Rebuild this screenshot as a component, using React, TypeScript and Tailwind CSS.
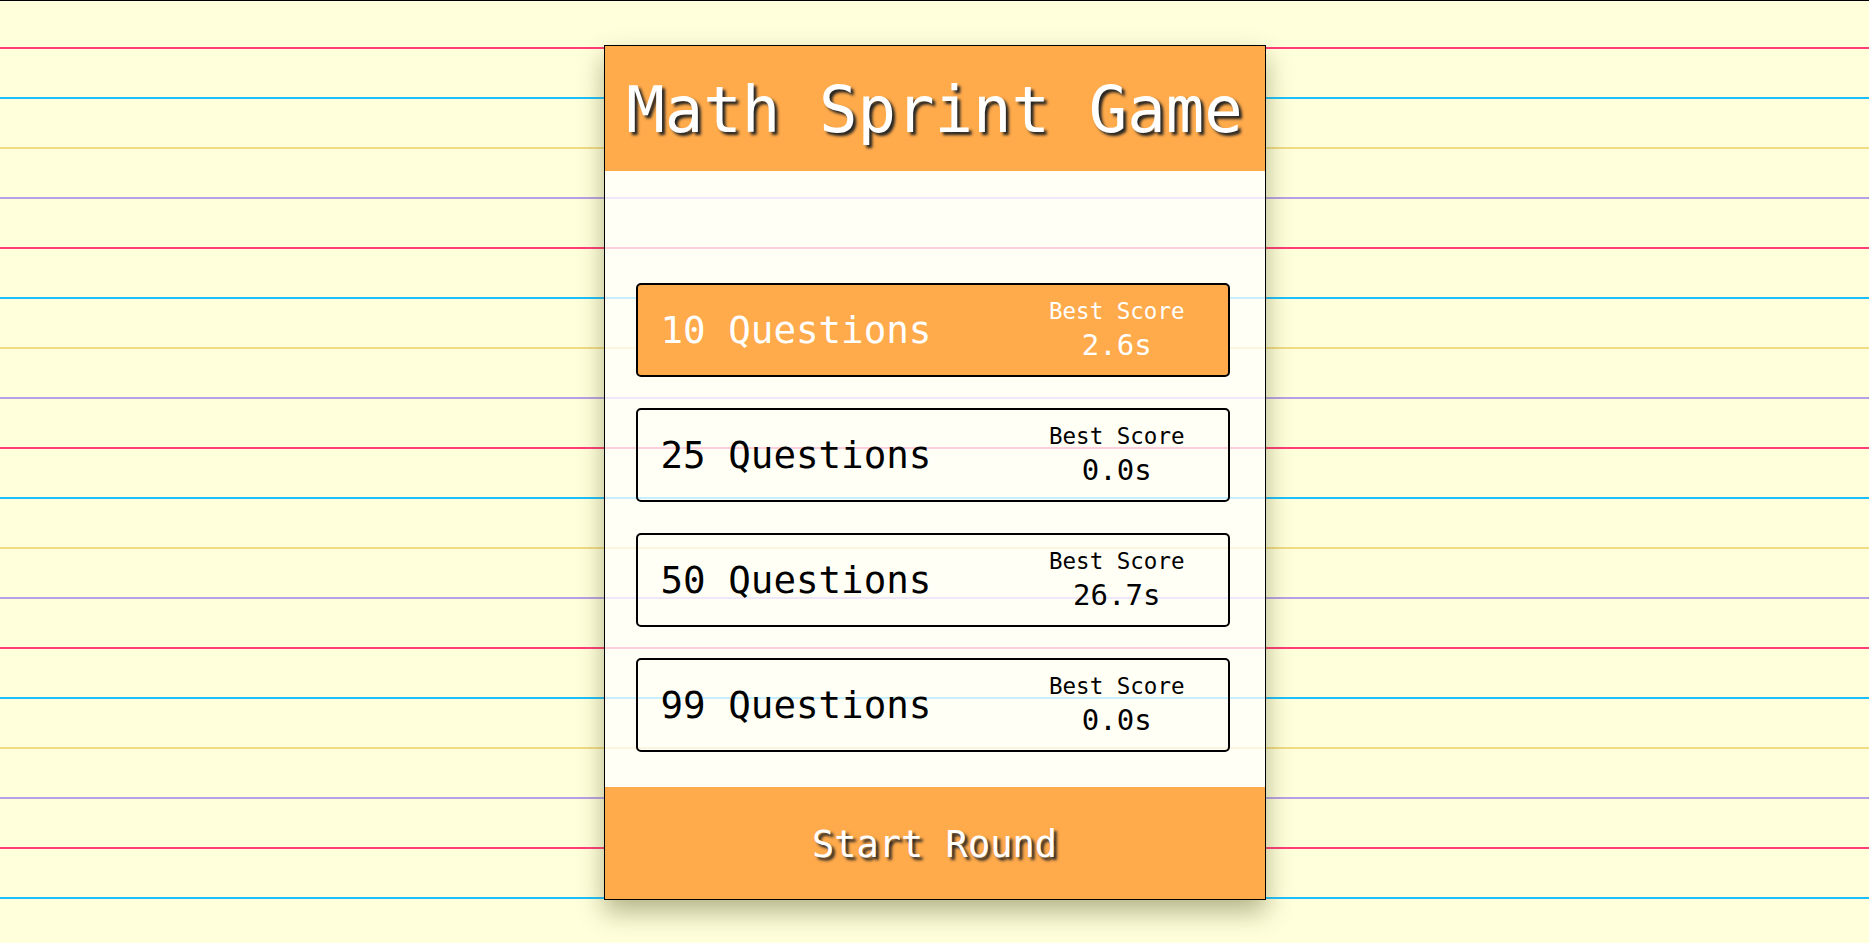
const rounds = [
  { count: 10, best: "2.6s", selected: true },
  { count: 25, best: "0.0s", selected: false },
  { count: 50, best: "26.7s", selected: false },
  { count: 99, best: "0.0s", selected: false },
];

export default function App() {
  return (
    <div className="min-h-screen w-full border-t border-black bg-[#ffffdc] bg-[repeating-linear-gradient(to_bottom,transparent_0px,transparent_46px,#ff3d77_46px,#ff3d77_48px,transparent_48px,transparent_96px,#1cc0ff_96px,#1cc0ff_98px,transparent_98px,transparent_146px,#f1dc84_146px,#f1dc84_148px,transparent_148px,transparent_196px,#b6a0e6_196px,#b6a0e6_198px,transparent_198px,transparent_200px)] pt-[44px] font-['DejaVu_Sans_Mono',monospace]">
      <div className="mx-auto flex h-[855px] w-[662px] flex-col border border-black bg-[#ffffff]/75 shadow-[0_12px_24px_rgba(90,90,40,0.45)]">
        <header className="flex h-[125px] items-center justify-center bg-[#ffab4c] pt-[3px]">
          <h1 className="text-[64px] text-white [text-shadow:3px_3px_3px_#222]">
            Math Sprint Game
          </h1>
        </header>

        <div className="flex flex-1 flex-col gap-[31px] pl-[31px] pr-[35px] pt-[112px]">
          {rounds.map((r) => (
            <div
              key={r.count}
              className={
                r.selected
                  ? "flex h-[94px] items-center justify-between rounded-[5px] border-2 border-black bg-[#ffab4c] pl-[23px] pr-[43px] text-white"
                  : "flex h-[94px] items-center justify-between rounded-[5px] border-2 border-black pl-[23px] pr-[43px] text-black"
              }
            >
              <span className="text-[37.5px]">{r.count} Questions</span>
              <div className="flex flex-col items-center">
                <span className="text-[22.5px] leading-[30px]">Best Score</span>
                <span className="text-[29px] leading-[38px]">{r.best}</span>
              </div>
            </div>
          ))}
        </div>

        <footer className="flex h-[112px] items-center justify-center bg-[#ffab4c] pt-[4px]">
          <span className="text-[37px] text-white [text-shadow:3px_3px_3px_#222]">Start Round</span>
        </footer>
      </div>
    </div>
  );
}
